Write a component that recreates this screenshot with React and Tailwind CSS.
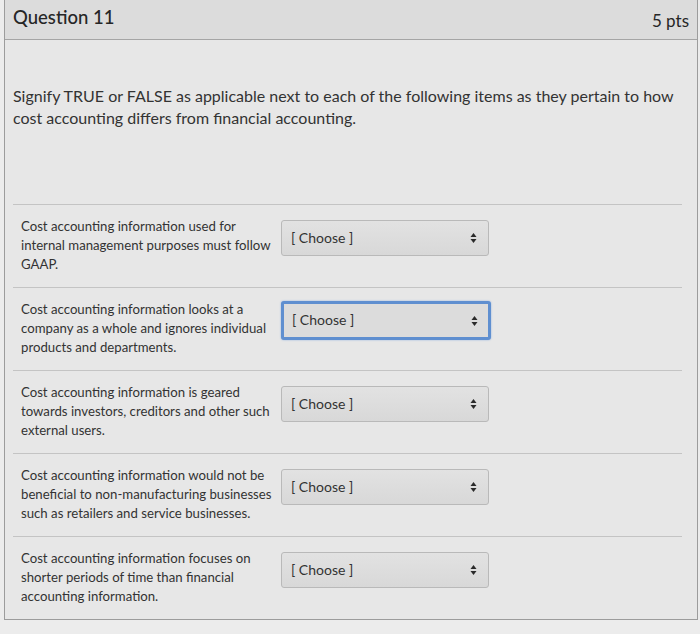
const items = [
  {
    text: 'Cost accounting information used for internal management purposes must follow GAAP.',
    focused: false,
  },
  {
    text: 'Cost accounting information looks at a company as a whole and ignores individual products and departments.',
    focused: true,
  },
  {
    text: 'Cost accounting information is geared towards investors, creditors and other such external users.',
    focused: false,
  },
  {
    text: 'Cost accounting information would not be beneficial to non-manufacturing businesses such as retailers and service businesses.',
    focused: false,
  },
  {
    text: 'Cost accounting information focuses on shorter periods of time than financial accounting information.',
    focused: false,
  },
];

function Arrows() {
  return (
    <svg width="7" height="12" viewBox="0 0 7 12" className="text-[#2a2a2a]">
      <path d="M3.5 1 L6.5 5 L0.5 5 Z" fill="currentColor" />
      <path d="M3.5 11 L6.5 7 L0.5 7 Z" fill="currentColor" />
    </svg>
  );
}

function Select({ focused }) {
  return (
    <div
      className={
        focused
          ? 'mt-[1px] w-[210px] h-[39px] flex items-center justify-between pl-[8px] pr-[10px] rounded-[3px] border-[3px] border-[#5f8fd0] bg-[#dcdcdc] shadow-[0_0_2px_#8fb0e0]'
          : 'mt-[3px] w-[208px] h-[36px] flex items-center justify-between pl-[9px] pr-[11px] rounded-[3px] border border-[#b9b9b9] bg-gradient-to-b from-[#e2e2e2] to-[#d8d8d8]'
      }
    >
      <span className="text-[14px] text-[#333] -mt-[2px]">[ Choose ]</span>
      <Arrows />
    </div>
  );
}

export default function App() {
  return (
    <div
      className="h-[634px] bg-[#ececec] overflow-hidden"
      style={{ fontFamily: 'Lato, "Open Sans", sans-serif' }}
    >
      <div className="ml-[4px] w-[694px] border-x border-b border-[#9c9c9c] bg-[#e7e7e7]">
        <div className="h-[40px] flex items-center justify-between pl-[8px] pr-[8px] bg-[#dcdcdc] border-b border-[#a5a5a5]">
          <h2 className="text-[18.5px] text-[#262626] font-medium -mt-[4px]">Question 11</h2>
          <span className="text-[17px] text-[#262626] mt-[3px]">5 pts</span>
        </div>

        <p className="mt-[45px] px-[8px] text-[16px] leading-[22px] text-[#333]">
          Signify TRUE or FALSE as applicable next to each of the following items as they pertain to how
          cost accounting differs from financial accounting.
        </p>

        <div className="mt-[75px] ml-[8px] mr-[15px]">
          {items.map((item, i) => (
            <div
              key={i}
              className="flex items-start border-t border-[#c4c4c4] pt-[12px] pb-[13px] pl-[8px]"
            >
              <p className="w-[260px] text-[13.2px] leading-[19px] text-[#333]">{item.text}</p>
              <Select focused={item.focused} />
            </div>
          ))}
        </div>
      </div>
    </div>
  );
}
